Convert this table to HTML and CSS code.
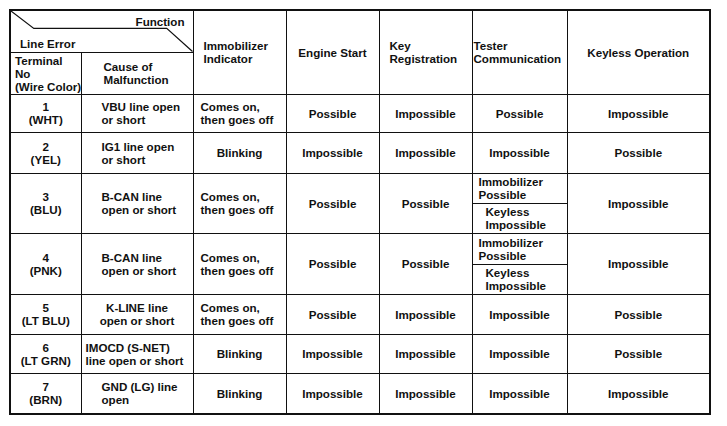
FILE: index.html
```html
<!DOCTYPE html>
<html>
<head>
<meta charset="utf-8">
<link rel="stylesheet" href="styles.css">
</head>
<body>
<table class="grid">
  <colgroup>
    <col class="c-term"><col class="c-cause"><col class="c-imm"><col class="c-eng"><col class="c-key"><col class="c-test"><col class="c-kop">
  </colgroup>
  <tr class="h1">
    <td colspan="2" class="diag">
      <svg class="diag-line" viewBox="0 0 183 42" preserveAspectRatio="none"><polyline points="0,0 23,18 157,18 183,42" fill="none" stroke="#111" stroke-width="1.2"/></svg>
      <div class="fn">Function</div>
      <div class="le">Line Error</div>
    </td>
    <td rowspan="2" class="hl">Immobilizer<br>Indicator</td>
    <td rowspan="2" class="hc">Engine Start</td>
    <td rowspan="2" class="hl">Key<br>Registration</td>
    <td rowspan="2" class="hl tight">Tester<br>Communication</td>
    <td rowspan="2" class="hc">Keyless Operation</td>
  </tr>
  <tr class="h2">
    <td class="hl term-h">Terminal<br>No<br>(Wire Color)</td>
    <td class="hl cause-h">Cause of<br>Malfunction</td>
  </tr>
  <tr class="r1">
    <td class="cc">1<br>(WHT)</td>
    <td class="cl">VBU line open<br>or short</td>
    <td class="il">Comes on,<br>then goes off</td>
    <td class="cc">Possible</td>
    <td class="cc">Impossible</td>
    <td class="cc">Possible</td>
    <td class="cc">Impossible</td>
  </tr>
  <tr class="r2">
    <td class="cc">2<br>(YEL)</td>
    <td class="cl">IG1 line open<br>or short</td>
    <td class="cc">Blinking</td>
    <td class="cc">Impossible</td>
    <td class="cc">Impossible</td>
    <td class="cc">Impossible</td>
    <td class="cc">Possible</td>
  </tr>
  <tr class="r3">
    <td class="cc">3<br>(BLU)</td>
    <td class="cl">B-CAN line<br>open or short</td>
    <td class="il">Comes on,<br>then goes off</td>
    <td class="cc">Possible</td>
    <td class="cc">Possible</td>
    <td class="split">
      <div class="sub sub-a a3">Immobilizer<br>Possible</div>
      <div class="sub sub-b">Keyless<br>Impossible</div>
    </td>
    <td class="cc">Impossible</td>
  </tr>
  <tr class="r4">
    <td class="cc">4<br>(PNK)</td>
    <td class="cl">B-CAN line<br>open or short</td>
    <td class="il">Comes on,<br>then goes off</td>
    <td class="cc">Possible</td>
    <td class="cc">Possible</td>
    <td class="split">
      <div class="sub sub-a a4">Immobilizer<br>Possible</div>
      <div class="sub sub-b">Keyless<br>Impossible</div>
    </td>
    <td class="cc">Impossible</td>
  </tr>
  <tr class="r5">
    <td class="cc">5<br>(LT BLU)</td>
    <td class="cc">K-LINE line<br>open or short</td>
    <td class="il">Comes on,<br>then goes off</td>
    <td class="cc">Possible</td>
    <td class="cc">Impossible</td>
    <td class="cc">Impossible</td>
    <td class="cc">Possible</td>
  </tr>
  <tr class="r6">
    <td class="cc">6<br>(LT GRN)</td>
    <td class="cl narrow">IMOCD (S-NET)<br>line open or short</td>
    <td class="cc">Blinking</td>
    <td class="cc">Impossible</td>
    <td class="cc">Impossible</td>
    <td class="cc">Impossible</td>
    <td class="cc">Possible</td>
  </tr>
  <tr class="r7">
    <td class="cc">7<br>(BRN)</td>
    <td class="cl">GND (LG) line<br>open</td>
    <td class="cc">Blinking</td>
    <td class="cc">Impossible</td>
    <td class="cc">Impossible</td>
    <td class="cc">Impossible</td>
    <td class="cc">Impossible</td>
  </tr>
</table>
</body>
</html>
```

FILE: styles.css
```css
html, body {
  margin: 0;
  padding: 0;
  background: #fff;
}
body {
  padding: 9px 0 0 9px;
  font-family: "Liberation Sans", Arial, sans-serif;
  font-weight: bold;
  font-size: 11.6px;
  line-height: 13px;
  color: #111;
}
.grid {
  border-collapse: collapse;
  table-layout: fixed;
  width: 702px;
  border: 2px solid #111;
}
.c-term { width: 71px; }
.c-cause { width: 112px; }
.c-imm { width: 93px; }
.c-eng { width: 93px; }
.c-key { width: 93px; }
.c-test { width: 95px; }
.c-kop { width: 143px; }
.grid td {
  border: 1px solid #111;
  padding: 0;
  vertical-align: middle;
  overflow: visible;
  white-space: nowrap;
}
.h1 { height: 42px; }
.h2 { height: 42px; }
.r1 { height: 38px; }
.r2 { height: 41px; }
.r3 { height: 59px; }
.r4 { height: 61px; }
.r5 { height: 40px; }
.r6 { height: 39px; }
.r7 { height: 41px; }
.diag {
  position: relative;
  vertical-align: top !important;
}
.diag-line {
  position: absolute;
  left: 0;
  top: 0;
  width: 100%;
  height: 100%;
}
.fn {
  text-align: right;
  padding: 4px 8px 0 0;
}
.le {
  padding: 9px 0 0 9px;
}
.hl {
  text-align: left;
  padding-left: 10px !important;
}
.hc {
  text-align: center;
}
.tight {
  padding-left: 1px !important;
}
.term-h {
  padding-left: 4px !important;
  vertical-align: bottom !important;
  padding-bottom: 1px !important;
}
.cause-h {
  padding-left: 22px !important;
}
.cc {
  text-align: center;
}
.cl {
  text-align: left;
  padding-left: 20px !important;
}
.cl.narrow {
  padding-left: 4px !important;
}
.il {
  text-align: left;
  padding-left: 7px !important;
}
.split {
  vertical-align: top !important;
}
.sub {
  display: flex;
  flex-direction: column;
  justify-content: center;
  text-align: left;
}
.sub-a {
  padding-left: 6px;
  border-bottom: 1px solid #111;
}
.a3 { height: 29px; }
.a4 { height: 30px; }
.sub-b {
  padding-left: 13px;
  height: 29px;
}
```
